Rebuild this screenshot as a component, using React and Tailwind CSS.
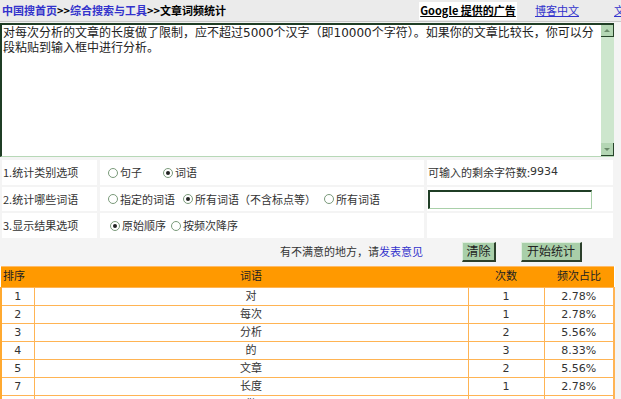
import React from "react";

const font = { fontFamily: '"DejaVu Sans", "Noto Sans CJK SC", sans-serif' };

const Radio = ({ checked, label }) => (
  <span className="inline-flex items-center gap-[2px]">
    <span className="w-[10px] h-[10px] rounded-full border border-[#7a9a7a] bg-white flex items-center justify-center">
      {checked && <span className="w-[4px] h-[4px] rounded-full bg-[#222]" />}
    </span>
    <span>{label}</span>
  </span>
);

const rows = [
  ["1", "对", "1", "2.78%"],
  ["2", "每次", "1", "2.78%"],
  ["3", "分析", "2", "5.56%"],
  ["4", "的", "3", "8.33%"],
  ["5", "文章", "2", "5.56%"],
  ["7", "长度", "1", "2.78%"],
  ["8", "做", "1", "2.78%"],
];

export default function App() {
  return (
    <div
      className="w-[621px] h-[399px] overflow-hidden bg-[#f4f4f4] text-[11px] text-[#333]"
      style={{ fontFamily: '"Noto Sans CJK SC", "DejaVu Sans", sans-serif' }}
    >
      {/* 顶部导航 */}
      <div className="h-[22px] flex items-center bg-[#ebebeb] border-b border-[#c8c8c8] whitespace-nowrap">
        <div className="pl-[2px] font-bold text-[11px] text-black">
          <span className="text-[#3333cc]">中国搜首页</span>&gt;&gt;
          <span className="text-[#3333cc]">综合搜索与工具</span>&gt;&gt;文章词频统计
        </div>
        <div className="ml-auto flex items-center">
          <span className="bg-white h-[18px] flex items-center font-bold underline text-black w-[98px] justify-center">
            Google 提供的广告
          </span>
          <span className="ml-[18px] underline text-[#3333cc]">博客中文</span>
          <span className="ml-[35px] underline text-[#3333cc] w-[7px] overflow-hidden">文</span>
        </div>
      </div>

      {/* 文本框 */}
      <div className="mt-[1px] w-[614px] h-[134px] flex bg-white border-t-2 border-l-2 border-t-[#1f3d25] border-l-[#1f3d25] border-b border-b-[#b7d8b7]">
        <div className="flex-1 px-[1px] pt-[1px] text-[12px] leading-[15px] text-[#222]" style={font}>
          对每次分析的文章的长度做了限制，应不超过5000个汉字（即10000个字符）。如果你的文章比较长，你可以分段粘贴到输入框中进行分析。
        </div>
        <div className="w-[13px] bg-[#cde6cd] flex flex-col justify-between">
          <div className="h-[12px] bg-[#b4d6b4] border-r border-b border-[#27432a] flex items-center justify-center">
            <span className="w-0 h-0 border-l-[3px] border-r-[3px] border-b-[3px] border-l-transparent border-r-transparent border-b-[#6a8a6a]" />
          </div>
          <div className="h-[13px] bg-[#b4d6b4] border-r border-b border-[#27432a] flex items-center justify-center">
            <span className="w-0 h-0 border-l-[3px] border-r-[3px] border-t-[3px] border-l-transparent border-r-transparent border-t-[#6a8a6a]" />
          </div>
        </div>
      </div>

      {/* 选项 */}
      <div className="mt-[3px] ml-[2px] w-[611px] grid grid-cols-[95px_324px_1fr] gap-x-[3px] gap-y-[2px]">
        <div className="bg-white h-[25px] flex items-center pl-[1px]">1.统计类别选项</div>
        <div className="bg-white h-[25px] flex items-center pl-[8px] gap-[21px]">
          <Radio label="句子" />
          <Radio checked label="词语" />
        </div>
        <div className="bg-white h-[25px] flex items-center pl-[1px]">
          可输入的剩余字符数:<span style={font}>9934</span>
        </div>

        <div className="bg-white h-[24px] flex items-center pl-[1px]">2.统计哪些词语</div>
        <div className="bg-white h-[24px] flex items-center pl-[8px] gap-[8px] whitespace-nowrap">
          <Radio label="指定的词语" />
          <Radio checked label="所有词语（不含标点等）" />
          <Radio label="所有词语" />
        </div>
        <div className="bg-white h-[24px] flex items-center pl-[1px]">
          <div className="w-[164px] h-[19px] bg-white border-t-2 border-l-2 border-t-[#1f3d25] border-l-[#1f3d25] border-r border-b border-r-[#a9d0a9] border-b-[#a9d0a9]" />
        </div>

        <div className="bg-white h-[25px] flex items-center pl-[1px]">3.显示结果选项</div>
        <div className="bg-white h-[25px] flex items-center pl-[10px] gap-[5px]">
          <Radio checked label="原始顺序" />
          <Radio label="按频次降序" />
        </div>
        <div className="bg-white h-[25px]" />

        <div className="col-span-2 h-[23px] flex items-center justify-end pr-[1px]">
          有不满意的地方，请<span className="text-[#3333cc]">发表意见</span>
        </div>
        <div className="h-[23px] flex items-center pl-[35px] gap-[25px]">
          <button className="h-[20px] w-[34px] bg-[#a9cfa9] border border-t-[#e0f0e0] border-l-[#e0f0e0] border-r-2 border-b-2 border-r-[#2b3f2b] border-b-[#2b3f2b] text-[12px] text-[#222] leading-none">
            清除
          </button>
          <button className="h-[20px] w-[61px] bg-[#a9cfa9] border border-t-[#e0f0e0] border-l-[#e0f0e0] border-r-2 border-b-2 border-r-[#2b3f2b] border-b-[#2b3f2b] text-[12px] text-[#222] leading-none">
            开始统计
          </button>
        </div>
      </div>

      {/* 结果表格 */}
      <table className="mt-[3px] w-[613px] border-collapse bg-white table-fixed" style={font}>
        <colgroup>
          <col className="w-[33px]" />
          <col className="w-[434px]" />
          <col className="w-[76px]" />
          <col className="w-[70px]" />
        </colgroup>
        <thead>
          <tr className="bg-[#ff9900] h-[21px] text-[#222]">
            <th className="font-normal text-left pl-[2px] border-t border-[#ffbb66]">排序</th>
            <th className="font-normal border-t border-[#ffbb66]">词语</th>
            <th className="font-normal border-t border-[#ffbb66]">次数</th>
            <th className="font-normal border-t border-[#ffbb66]">频次占比</th>
          </tr>
        </thead>
        <tbody>
          {rows.map((r) => (
            <tr key={r[0]} className="h-[18px] leading-[16px]">
              <td className="text-center border border-[#ffb454] border-l-2 border-l-[#ffa930]">{r[0]}</td>
              <td className="text-center border border-[#ffb454]">{r[1]}</td>
              <td className="text-center border border-[#ffb454]">{r[2]}</td>
              <td className="text-center border border-[#ffb454] border-r-2">{r[3]}</td>
            </tr>
          ))}
        </tbody>
      </table>
    </div>
  );
}
